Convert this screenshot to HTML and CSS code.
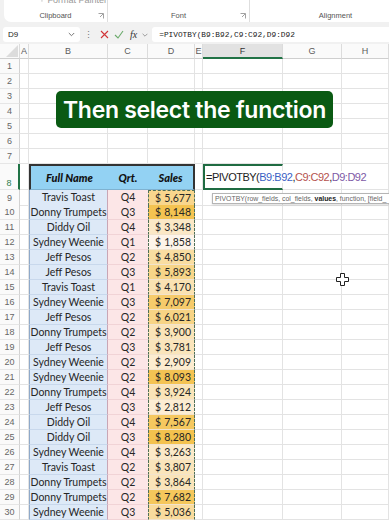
FILE: index.html
```html
<!DOCTYPE html>
<html>
<head>
<meta charset="utf-8">
<link rel="stylesheet" href="styles.css">
</head>
<body>
<div class="ribbon">
  <div class="grp clip">
    <div class="fp"><svg width="8" height="8" viewBox="0 0 8 8"><path d="M1 1h5v2H1z M3.5 3v4" fill="none" stroke="#9a9a9a" stroke-width="1"/></svg>Format Painter</div>
    <div class="glabel"><span></span><span>Clipboard</span><svg class="launch" width="6" height="6" viewBox="0 0 6 6"><path d="M0.5 0.5h5v5M2 4l3-3" fill="none" stroke="#8a8a8a" stroke-width="0.8"/></svg></div>
  </div>
  <div class="grp font">
    <div class="fp"></div>
    <div class="glabel"><span></span><span>Font</span><svg class="launch" width="6" height="6" viewBox="0 0 6 6"><path d="M0.5 0.5h5v5M2 4l3-3" fill="none" stroke="#8a8a8a" stroke-width="0.8"/></svg></div>
  </div>
  <div class="grp align">
    <div class="fp"></div>
    <div class="glabel"><span></span><span>Alignment</span><span></span></div>
  </div>
</div>
<div class="fbar">
  <div class="namebox"><span>D9</span><svg width="7" height="5" viewBox="0 0 7 5"><path d="M0.8 1l2.7 2.7L6.2 1" fill="none" stroke="#666" stroke-width="0.9"/></svg></div>
  <div class="ficons">
    <span class="dots">⋮</span>
    <svg width="9" height="9" viewBox="0 0 9 9"><path d="M1 1l7 7M8 1L1 8" stroke="#d13438" stroke-width="1.1"/></svg>
    <svg width="10" height="9" viewBox="0 0 10 9"><path d="M1 5l3 3 5-7" fill="none" stroke="#6aaa6a" stroke-width="1.1"/></svg>
    <span class="fx">fx</span>
    <svg width="6" height="4" viewBox="0 0 6 4"><path d="M0.6 0.8l2.4 2.4 2.4-2.4" fill="none" stroke="#888" stroke-width="0.8"/></svg>
  </div>
  <div class="finput">=PIVOTBY(B9:B92,C9:C92,D9:D92</div>
</div>
<div class="sheet">
  <div class="colhdr">
    <span class="corner"><svg width="14" height="12" viewBox="0 0 14 12"><path d="M14 0v12H2z" fill="#dcdcdc"/></svg></span>
    <span>A</span><span>B</span><span>C</span><span>D</span><span>E</span><span class="cur">F</span><span>G</span><span>H</span>
  </div>
  <div class="row"><span class="rh">1</span><span></span><span></span><span></span><span></span><span></span><span></span><span></span><span></span></div>
  <div class="row"><span class="rh">2</span><span></span><span></span><span></span><span></span><span></span><span></span><span></span><span></span></div>
  <div class="row"><span class="rh">3</span><span></span><span></span><span></span><span></span><span></span><span></span><span></span><span></span></div>
  <div class="row"><span class="rh">4</span><span></span><span></span><span></span><span></span><span></span><span></span><span></span><span></span></div>
  <div class="row"><span class="rh">5</span><span></span><span></span><span></span><span></span><span></span><span></span><span></span><span></span></div>
  <div class="row"><span class="rh">6</span><span></span><span></span><span></span><span></span><span></span><span></span><span></span><span></span></div>
  <div class="row"><span class="rh">7</span><span></span><span></span><span></span><span></span><span></span><span></span><span></span><span></span></div>
  <div class="row r8"><span class="rh">8</span><span></span><span class="hd hl">Full Name</span><span class="hd">Qrt.</span><span class="hd hr">Sales</span><span></span><span class="act"><span class="edit">=PIVOTBY(<span class="c1">B9:B92</span>,<span class="c2">C9:C92</span>,<span class="c3">D9:D92</span></span></span><span></span><span></span></div>
  <div class="row r9"><span class="rh">9</span><span></span><span class="nm">Travis Toast</span><span class="qt">Q4</span><span class="sl" style="background:rgb(248,214,141)"><span>$</span><span>5,677</span></span><span></span><span></span><span></span><span></span></div>
  <div class="row"><span class="rh">10</span><span></span><span class="nm">Donny Trumpets</span><span class="qt">Q3</span><span class="sl" style="background:rgb(244,195,81)"><span>$</span><span>8,148</span></span><span></span><span></span><span></span><span></span></div>
  <div class="row"><span class="rh">11</span><span></span><span class="nm">Diddy Oil</span><span class="qt">Q4</span><span class="sl" style="background:rgb(251,232,198)"><span>$</span><span>3,348</span></span><span></span><span></span><span></span><span></span></div>
  <div class="row"><span class="rh">12</span><span></span><span class="nm">Sydney Weenie</span><span class="qt">Q1</span><span class="sl" style="background:rgb(253,244,234)"><span>$</span><span>1,858</span></span><span></span><span></span><span></span><span></span></div>
  <div class="row"><span class="rh">13</span><span></span><span class="nm">Jeff Pesos</span><span class="qt">Q2</span><span class="sl" style="background:rgb(249,221,161)"><span>$</span><span>4,850</span></span><span></span><span></span><span></span><span></span></div>
  <div class="row"><span class="rh">14</span><span></span><span class="nm">Jeff Pesos</span><span class="qt">Q3</span><span class="sl" style="background:rgb(247,213,136)"><span>$</span><span>5,893</span></span><span></span><span></span><span></span><span></span></div>
  <div class="row"><span class="rh">15</span><span></span><span class="nm">Travis Toast</span><span class="qt">Q1</span><span class="sl" style="background:rgb(250,226,178)"><span>$</span><span>4,170</span></span><span></span><span></span><span></span><span></span></div>
  <div class="row"><span class="rh">16</span><span></span><span class="nm">Sydney Weenie</span><span class="qt">Q3</span><span class="sl" style="background:rgb(246,203,107)"><span>$</span><span>7,097</span></span><span></span><span></span><span></span><span></span></div>
  <div class="row"><span class="rh">17</span><span></span><span class="nm">Jeff Pesos</span><span class="qt">Q2</span><span class="sl" style="background:rgb(247,212,133)"><span>$</span><span>6,021</span></span><span></span><span></span><span></span><span></span></div>
  <div class="row"><span class="rh">18</span><span></span><span class="nm">Donny Trumpets</span><span class="qt">Q2</span><span class="sl" style="background:rgb(250,228,184)"><span>$</span><span>3,900</span></span><span></span><span></span><span></span><span></span></div>
  <div class="row"><span class="rh">19</span><span></span><span class="nm">Jeff Pesos</span><span class="qt">Q3</span><span class="sl" style="background:rgb(250,229,187)"><span>$</span><span>3,781</span></span><span></span><span></span><span></span><span></span></div>
  <div class="row"><span class="rh">20</span><span></span><span class="nm">Sydney Weenie</span><span class="qt">Q2</span><span class="sl" style="background:rgb(252,236,208)"><span>$</span><span>2,909</span></span><span></span><span></span><span></span><span></span></div>
  <div class="row"><span class="rh">21</span><span></span><span class="nm">Sydney Weenie</span><span class="qt">Q2</span><span class="sl" style="background:rgb(244,195,83)"><span>$</span><span>8,093</span></span><span></span><span></span><span></span><span></span></div>
  <div class="row"><span class="rh">22</span><span></span><span class="nm">Donny Trumpets</span><span class="qt">Q4</span><span class="sl" style="background:rgb(250,228,184)"><span>$</span><span>3,924</span></span><span></span><span></span><span></span><span></span></div>
  <div class="row"><span class="rh">23</span><span></span><span class="nm">Jeff Pesos</span><span class="qt">Q3</span><span class="sl" style="background:rgb(252,237,211)"><span>$</span><span>2,812</span></span><span></span><span></span><span></span><span></span></div>
  <div class="row"><span class="rh">24</span><span></span><span class="nm">Diddy Oil</span><span class="qt">Q4</span><span class="sl" style="background:rgb(245,200,95)"><span>$</span><span>7,567</span></span><span></span><span></span><span></span><span></span></div>
  <div class="row"><span class="rh">25</span><span></span><span class="nm">Diddy Oil</span><span class="qt">Q3</span><span class="sl" style="background:rgb(244,194,78)"><span>$</span><span>8,280</span></span><span></span><span></span><span></span><span></span></div>
  <div class="row"><span class="rh">26</span><span></span><span class="nm">Sydney Weenie</span><span class="qt">Q4</span><span class="sl" style="background:rgb(251,233,200)"><span>$</span><span>3,263</span></span><span></span><span></span><span></span><span></span></div>
  <div class="row"><span class="rh">27</span><span></span><span class="nm">Travis Toast</span><span class="qt">Q2</span><span class="sl" style="background:rgb(250,229,187)"><span>$</span><span>3,807</span></span><span></span><span></span><span></span><span></span></div>
  <div class="row"><span class="rh">28</span><span></span><span class="nm">Donny Trumpets</span><span class="qt">Q2</span><span class="sl" style="background:rgb(250,228,185)"><span>$</span><span>3,864</span></span><span></span><span></span><span></span><span></span></div>
  <div class="row"><span class="rh">29</span><span></span><span class="nm">Donny Trumpets</span><span class="qt">Q2</span><span class="sl" style="background:rgb(245,199,92)"><span>$</span><span>7,682</span></span><span></span><span></span><span></span><span></span></div>
  <div class="row"><span class="rh">30</span><span></span><span class="nm">Sydney Weenie</span><span class="qt">Q3</span><span class="sl" style="background:rgb(249,219,157)"><span>$</span><span>5,036</span></span><span></span><span></span><span></span><span></span></div>
</div>
<div class="banner">Then select the function</div>
<div class="tip">PIVOTBY(row_fields, col_fields, <b>values</b>, function, [field_</div>
<svg class="cursor" width="13" height="13" viewBox="0 0 13 13"><path d="M4.5 0.5h4v4h4v4h-4v4h-4v-4h-4v-4h4z" fill="#fff" stroke="#222" stroke-width="1"/></svg>
</body>
</html>
```
FILE: styles.css
```css
* { box-sizing: border-box; }
html, body { margin: 0; padding: 0; }
body {
  width: 389px;
  height: 520px;
  overflow: hidden;
  position: relative;
  background: #f1f1f1;
  font-family: "Liberation Sans", Arial, sans-serif;
}

/* ribbon */
.ribbon {
  display: flex;
  height: 22px;
  margin-left: 4px;
  background: #fff;
  border-radius: 0 0 0 7px;
  overflow: hidden;
}
.grp {
  display: flex;
  flex-direction: column;
  justify-content: space-between;
  border-right: 1px solid #dedede;
  padding-bottom: 2px;
}
.clip { width: 104px; }
.font { width: 142px; }
.align { flex: 1; border-right: none; padding-left: 32px; }
.fp {
  margin-top: -5px;
  height: 10px;
  display: flex;
  align-items: center;
  gap: 3px;
  padding-left: 36px;
  font-size: 9px;
  color: #9a9a9a;
  white-space: nowrap;
}
.glabel {
  display: grid;
  grid-template-columns: 1fr auto 1fr;
  align-items: center;
  font-size: 7.5px;
  line-height: 9px;
  color: #555;
}
.launch { justify-self: end; margin-right: 3px; }

/* formula bar */
.fbar {
  display: flex;
  height: 15px;
  margin-top: 5px;
  margin-bottom: 2px;
}
.namebox {
  width: 77px;
  margin-left: 3px;
  background: #fff;
  border-radius: 3px;
  display: flex;
  align-items: center;
  justify-content: space-between;
  padding: 0 5px 0 5px;
  font-size: 8px;
  color: #222;
}
.ficons {
  display: flex;
  align-items: center;
  gap: 5px;
  padding: 0 4px 0 4px;
}
.dots { font-size: 9px; color: #777; margin-right: 2px; }
.fx {
  font-family: "Liberation Serif", serif;
  font-style: italic;
  font-size: 10px;
  color: #333;
  margin-left: 1px;
}
.finput {
  flex: 1;
  background: #fff;
  border-radius: 3px 0 0 3px;
  display: flex;
  align-items: center;
  padding-left: 7px;
  font-family: "Liberation Mono", monospace;
  font-size: 7.8px;
  color: #222;
  white-space: nowrap;
}

/* sheet */
.sheet {
  --cols: 20px 9px 79px 40px 47px 8px 80px 59px 47px;
  background: #fff;
}
.colhdr {
  display: grid;
  grid-template-columns: var(--cols);
  height: 15px;
  background: #fafafa;
}
.colhdr > span {
  display: flex;
  align-items: center;
  justify-content: center;
  font-size: 9px;
  color: #5c5c5c;
  border-right: 1px solid #dcdcdc;
  border-bottom: 1px solid #cfcfcf;
}
.colhdr > .corner { justify-content: flex-end; align-items: flex-end; padding: 0 1px 1px 0; }
.colhdr > .cur {
  background: #e2e2e2;
  color: #333;
  border-bottom: 2px solid #217346;
}
.row {
  display: grid;
  grid-template-columns: var(--cols);
  height: 15px;
}
.r8 { height: 26px; }
.row > span {
  border-right: 1px solid #e3e3e3;
  border-bottom: 1px solid #e3e3e3;
  min-width: 0;
}
.row > .rh {
  background: #fafafa;
  border-right-color: #d2d2d2;
  border-bottom-color: #e6e6e6;
  font-size: 9px;
  color: #666;
  display: flex;
  align-items: center;
  justify-content: center;
}
.r8 > .rh {
  align-items: flex-end;
  padding-bottom: 1px;
  color: #2d7d4f;
  border-right: 2px solid #217346;
}

/* table */
.row > .hd {
  background: #93d2f3;
  border-top: 2px solid #333;
  border-bottom: 1px solid #7fb2d0;
  border-right: none;
  display: flex;
  align-items: center;
  justify-content: center;
  font-family: Lato, "Liberation Sans", sans-serif;
  font-weight: 900;
  font-style: italic;
  font-size: 11px;
  color: #111;
}
.row > .hl { border-left: 2px solid #333; }
.row > .hr { border-right: 2px solid #333; }
.row > .nm, .row > .qt, .row > .sl {
  font-family: Lato, "Liberation Sans", sans-serif;
  font-size: 10.5px;
  line-height: 14px;
  color: #262626;
  white-space: nowrap;
}
.row > .nm {
  background: #dde9f7;
  border-left: 1px solid #8fa9c9;
  border-right: 1px solid #c9a6b5;
  border-bottom-color: #c8d8ec;
  text-align: center;
}
.row > .qt {
  background: #fce6e7;
  border-right: none;
  border-bottom-color: #f1d3d6;
  text-align: center;
}
.row > .sl {
  display: flex;
  justify-content: space-between;
  padding: 0 3px 0 6px;
  border-left: 1px dashed #4f6f58;
  border-right: 1px dashed #4f6f58;
  border-bottom-color: #f2e3cd;
}
.r9 > .sl { border-top: 1px dashed #4f6f58; }

/* active edit cell */
.row > .act {
  border: 2px solid #1f6b42;
  border-right: 1px solid #e3e3e3;
  display: flex;
  align-items: center;
  padding-left: 1px;
  white-space: nowrap;
  overflow: visible;
}
.edit {
  position: relative;
  z-index: 1;
  background: #fff;
  font-family: "Liberation Sans", Arial, sans-serif;
  font-size: 11px;
  letter-spacing: -0.5px;
  color: #222;
  padding-right: 2px;
}
.c1 { color: #3b5fc4; }
.c2 { color: #b5524d; }
.c3 { color: #7d5aa6; }

/* overlays */
.banner {
  position: absolute;
  left: 56px;
  top: 91px;
  width: 277px;
  height: 37px;
  background: #0a5a13;
  border-radius: 5px;
  color: #fff;
  font-family: Inter, "Liberation Sans", sans-serif;
  font-weight: 600;
  font-size: 23px;
  letter-spacing: -0.3px;
  display: flex;
  align-items: center;
  justify-content: center;
  white-space: nowrap;
}
.tip {
  position: absolute;
  left: 212px;
  top: 193px;
  width: 200px;
  height: 11px;
  background: #fff;
  border: 1px solid #b5b5b5;
  box-shadow: 0 1px 2px rgba(0,0,0,0.15);
  padding: 0 2px;
  font-size: 6.9px;
  line-height: 9px;
  color: #666;
  white-space: nowrap;
  overflow: hidden;
  z-index: 2;
}
.tip b { color: #222; }
.cursor {
  position: absolute;
  left: 336px;
  top: 273px;
}
```
